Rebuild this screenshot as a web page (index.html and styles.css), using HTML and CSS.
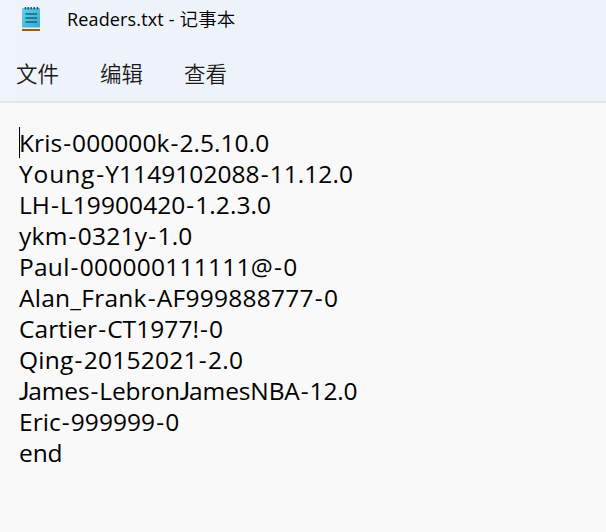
FILE: index.html
```html
<!DOCTYPE html>
<html lang="zh-CN">
<head>
<meta charset="utf-8">
<title>Readers.txt - 记事本</title>
<link rel="stylesheet" href="styles.css">
</head>
<body>
<div class="window">
  <header class="chrome">
    <div class="titlebar">
      <svg class="app-icon" width="18" height="26" viewBox="0 0 18 26" aria-hidden="true">
        <defs>
          <linearGradient id="paper" x1="0" y1="0" x2="1" y2="1">
            <stop offset="0" stop-color="#62d2ee"/>
            <stop offset="1" stop-color="#35a9cd"/>
          </linearGradient>
        </defs>
        <rect x="0" y="23" width="18" height="2" fill="#9b5a18"/>
        <rect x="0" y="21.5" width="18" height="1.5" fill="#eef0ee"/>
        <rect x="0" y="2" width="18" height="19.6" rx="1" fill="url(#paper)"/>
        <path d="M3.5 1v2.5M6.3 1v2.5M9.2 1v2.5M12.2 1v2.5M15.4 1v2.5" stroke="#24505f" stroke-width="1.5"/>
        <path d="M3.5 8h11.500M3.500 12h11.500M3.500 16h11.500" stroke="#15647c" stroke-width="1.6"/>
      </svg>
      <h1 class="title">Readers.txt - <span class="app-name">记事本</span></h1>
    </div>
    <nav class="menu">
      <span>文件</span>
      <span>编辑</span>
      <span>查看</span>
    </nav>
  </header>
  <main class="editor">
    <div class="line"><span class="caret"></span>Kris<i>-</i>000000k<i>-</i>2.5.10.0</div>
    <div class="line"><span class="wide">Young</span><i>-</i>Y1149102088<i>-</i>11.12.0</div>
    <div class="line">LH<i>-</i>L19900420<i>-</i>1.2.3.0</div>
    <div class="line loose">ykm<i>-</i>0321y<i>-</i>1.0</div>
    <div class="line loose">Paul<i>-</i>000000111111@<i>-</i>0</div>
    <div class="line loose">Alan_Frank<i>-</i>AF999888777<i>-</i>0</div>
    <div class="line">Cartier<i>-</i>CT1977!<i>-</i>0</div>
    <div class="line loose">Qing<i>-</i>20152021<i>-</i>2.0</div>
    <div class="line tight"><b>J</b>ames<i>-</i>Lebron<b>J</b>amesNBA<i>-</i>12.0</div>
    <div class="line">Eric<i>-</i>999999<i>-</i>0</div>
    <div class="line tight">end</div>
  </main>
</div>
</body>
</html>
```
FILE: styles.css
```css
body {
  margin: 0;
  background: #f9f9f9;
  color: #000;
  font-family: "Open Sans", "Noto Sans CJK SC", sans-serif;
}
.window {
  height: 532px;
  display: flex;
  flex-direction: column;
  overflow: hidden;
}
.chrome {
  box-sizing: border-box;
  height: 103px;
  border-bottom: 2px solid #e3e5e8;
  background: linear-gradient(90deg, #eff3fb, #edf3f8 60%);
}
.titlebar {
  display: flex;
  align-items: center;
  height: 38px;
  padding-left: 22px;
}
.app-icon { margin-right: 27px; }
.title {
  margin: -2px 0 0;
  font-size: 18px;
  line-height: 26px;
  font-weight: 400;
  letter-spacing: 0.15px;
  white-space: nowrap;
}
.app-name {
  font-family: "Noto Sans CJK SC", sans-serif;
  font-size: 18.5px;
  font-weight: 350;
}
.menu {
  display: flex;
  gap: 41px;
  padding: 19px 0 0 16px;
  font: 350 21.5px/32px "Noto Sans CJK SC", sans-serif;
  color: #1a1a1a;
}
.editor {
  flex: 1;
  padding: 24px 0 0 19px;
}
.line {
  position: relative;
  height: 31px;
  font-size: 24.5px;
  line-height: 31px;
  font-kerning: none;
  letter-spacing: 0.06px;
  white-space: pre;
}
.line.loose { letter-spacing: 0.25px; }
.line.tight { letter-spacing: -0.12px; }
.wide { letter-spacing: 0.9px; }
.line i {
  font-style: normal;
  padding: 0 1px;
}
.line b {
  font-family: Lato, sans-serif;
  font-weight: 400;
  margin-right: -1px;
}
.caret {
  position: absolute;
  left: 0;
  top: 0;
  width: 1px;
  height: 31px;
  background: #000;
}
```
